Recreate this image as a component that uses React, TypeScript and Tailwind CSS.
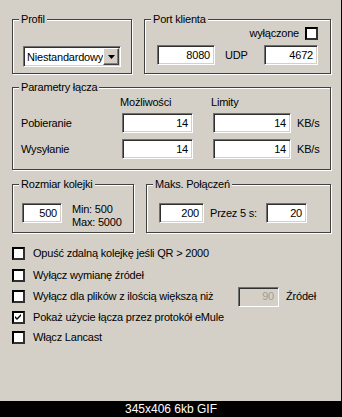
import type { ReactNode } from "react";

const Group = ({
  label,
  className,
  children,
}: {
  label: string;
  className?: string;
  children?: ReactNode;
}) => (
  <div
    className={`relative border border-[#404040] shadow-[1px_1px_0_#fff,inset_1px_1px_0_#fff] ${className ?? ""}`}
  >
    <span className="absolute -top-[8px] left-[6px] bg-[#d4d0c8] px-[2px] leading-[14px]">
      {label}
    </span>
    {children}
  </div>
);

const Field = ({
  value,
  className,
  disabled,
}: {
  value: string;
  className?: string;
  disabled?: boolean;
}) => (
  <div
    className={`flex h-[20px] items-center justify-end border border-t-[#707070] border-l-[#707070] border-b-white border-r-white pr-[4px] shadow-[inset_1px_1px_0_#303030,inset_-1px_-1px_0_#d4d0c8] ${
      disabled ? "bg-[#d4d0c8] text-[#a09c94]" : "bg-white"
    } ${className ?? ""}`}
  >
    {value}
  </div>
);

const CheckBox = ({ checked }: { checked?: boolean }) => (
  <div className="flex h-[13px] w-[13px] shrink-0 items-center justify-center border-2 border-t-black border-l-black border-b-[#303030] border-r-[#303030] bg-white">
    {checked && (
      <svg width="7" height="7" viewBox="0 0 7 7">
        <path d="M0 2 L2 4 L6 0 L6 2 L2 6 L0 4 Z" fill="#000" />
      </svg>
    )}
  </div>
);

const CheckRow = ({
  label,
  checked,
  className,
  children,
}: {
  label: string;
  checked?: boolean;
  className?: string;
  children?: ReactNode;
}) => (
  <div className={`flex items-center gap-[8px] ${className ?? ""}`}>
    <CheckBox checked={checked} />
    {children ?? <span>{label}</span>}
  </div>
);

export default function App() {
  return (
    <div className="flex h-[417px] w-[342px] flex-col bg-black font-['Liberation_Sans',Arial,sans-serif] text-[11px] text-black">
      <div className="flex h-[401px] w-[341px] flex-col bg-[#d4d0c8] pt-[19px] pr-[10px] pl-[12px] tracking-[-0.2px]">
        {/* Profil + Port */}
        <div className="flex h-[55px] gap-[12px]">
          <Group label="Profil" className="w-[122px] pt-[26px] pl-[10px]">
            <div className="flex h-[21px] w-[98px] items-center border border-t-[#707070] border-l-[#707070] border-b-white border-r-white bg-white p-[1px] shadow-[inset_1px_1px_0_#303030,inset_-1px_-1px_0_#d4d0c8]">
              <span className="flex-1 pl-[2px] pt-[1px]">Niestandardowy</span>
              <div className="flex h-[17px] w-[16px] items-center justify-center border border-t-white border-l-white border-b-[#404040] border-r-[#404040] bg-[#d4d0c8] shadow-[inset_-1px_-1px_0_#808080]">
                <svg width="7" height="4" viewBox="0 0 7 4">
                  <path d="M0 0 H7 L3.5 4 Z" fill="#000" />
                </svg>
              </div>
            </div>
          </Group>
          <Group label="Port klienta" className="flex-1 pt-[7px] pr-[12px] pl-[12px]">
            <div className="flex h-[13px] items-center justify-end gap-[6px]">
              <span>wyłączone</span>
              <CheckBox />
            </div>
            <div className="mt-[5px] flex items-center">
              <Field value="8080" className="w-[58px]" />
              <span className="ml-[10px] w-[39px]">UDP</span>
              <Field value="4672" className="w-[54px]" />
            </div>
          </Group>
        </div>

        {/* Parametry łącza */}
        <Group label="Parametry łącza" className="mt-[13px] h-[83px] pt-[7px] pl-[8px]">
          <div className="grid grid-cols-[99px_71px_20px_78px_6px_auto] items-center">
            <span />
            <span className="h-[14px] leading-[14px]">Możliwości</span>
            <span />
            <span className="h-[14px] leading-[14px]">Limity</span>
            <span />
            <span />
          </div>
          <div className="mt-[4px] grid grid-cols-[101px_71px_20px_78px_6px_auto] items-center">
            <span>Pobieranie</span>
            <Field value="14" />
            <span />
            <Field value="14" />
            <span />
            <span>KB/s</span>
          </div>
          <div className="mt-[6px] grid grid-cols-[101px_71px_20px_78px_6px_auto] items-center">
            <span>Wysyłanie</span>
            <Field value="14" />
            <span />
            <Field value="14" />
            <span />
            <span>KB/s</span>
          </div>
        </Group>

        {/* Rozmiar kolejki + Maks. Połączeń */}
        <div className="mt-[14px] flex h-[49px] gap-[12px]">
          <Group label="Rozmiar kolejki" className="flex w-[122px] items-start gap-[10px] pt-[18px] pl-[9px]">
            <Field value="500" className="w-[40px]" />
            <div className="leading-[13px]">
              <div>Min: 500</div>
              <div>Max: 5000</div>
            </div>
          </Group>
          <Group label="Maks. Połączeń" className="flex flex-1 items-start pt-[18px] pl-[12px]">
            <Field value="200" className="w-[45px]" />
            <span className="ml-[6px] w-[56px] leading-[20px]">Przez 5 s:</span>
            <Field value="20" className="w-[41px]" />
          </Group>
        </div>

        {/* Checkboxes */}
        <div className="mt-[10px] flex flex-col">
          <CheckRow className="h-[21px]" label="Opuść zdalną kolejkę jeśli QR > 2000" />
          <CheckRow className="h-[22px]" label="Wyłącz wymianę źródeł" />
          <CheckRow className="h-[21px]" label="">
            <span className="w-[197px]">Wyłącz dla plików z ilością większą niż</span>
            <Field value="90" disabled className="w-[41px]" />
            <span className="ml-[-1px]">Źródeł</span>
          </CheckRow>
          <CheckRow className="h-[20px]" checked label="Pokaż użycie łącza przez protokół eMule" />
          <CheckRow className="h-[20px]" label="Włącz Lancast" />
        </div>
      </div>
      <div className="flex h-[16px] w-[342px] items-center justify-center text-[12px] leading-[16px] text-white">
        345x406 6kb GIF
      </div>
    </div>
  );
}
